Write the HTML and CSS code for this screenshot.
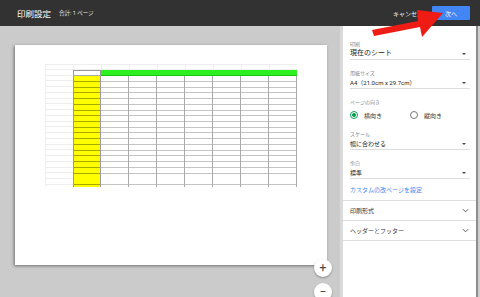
FILE: index.html
```html
<!DOCTYPE html>
<html lang="ja">
<head>
  <meta charset="UTF-8">
  <title>印刷設定</title>
  <link rel="stylesheet" href="styles.css">
</head>
<body>
  <header class="topbar">
    <div class="title"><b>印刷設定</b><span class="count">合計: 1 ページ</span></div>
    <div class="actions">
      <span class="cancel">キャンセル</span>
      <button class="next">次へ</button>
    </div>
  </header>

  <div class="main">
    <!-- preview -->
    <div class="preview">
      <div class="page">
        <div class="sheet">
          <div class="row1"></div>
          <div class="colA"></div>
          <div class="b2"></div>
          <div class="c2"></div>
          <div class="b3"></div>
          <div class="c3"></div>
        </div>
      </div>
      <div class="zoom">
        <button class="zbtn">+</button>
        <button class="zbtn">−</button>
      </div>
    </div>

    <!-- settings -->
    <div class="panel">
      <div class="fields">
        <div class="field">
          <div class="lbl">印刷</div>
          <div class="sel big">現在のシート<span class="caret"></span></div>
        </div>
        <div class="field">
          <div class="lbl">用紙サイズ</div>
          <div class="sel">A4（21.0cm x 29.7cm）<span class="caret"></span></div>
        </div>
        <div class="field">
          <div class="lbl">ページの向き</div>
          <div class="radios">
            <span class="radio on"><i></i>横向き</span>
            <span class="radio"><i></i>縦向き</span>
          </div>
        </div>
        <div class="field">
          <div class="lbl">スケール</div>
          <div class="sel">幅に合わせる<span class="caret"></span></div>
        </div>
        <div class="field">
          <div class="lbl">余白</div>
          <div class="sel">標準<span class="caret"></span></div>
        </div>
        <div class="link">カスタムの改ページを設定</div>
      </div>
      <div class="section">印刷形式
        <svg viewBox="0 0 8 5" width="7" height="5"><path d="M1 1l3 3 3-3" fill="none" stroke="#555" stroke-width="1.1"/></svg>
      </div>
      <div class="section">ヘッダーとフッター
        <svg viewBox="0 0 8 5" width="7" height="5"><path d="M1 1l3 3 3-3" fill="none" stroke="#555" stroke-width="1.1"/></svg>
      </div>
    </div>
    <div class="scroll"></div>
  </div>

  <!-- annotation arrow -->
  <svg class="arrow" width="85" height="40" viewBox="0 0 85 40">
    <polygon points="7,25 53,16 52,5 78,8 57,32 55,22 9,31" fill="#ee1c14"/>
  </svg>
</body>
</html>
```

FILE: styles.css
```css
body { margin: 0; width: 480px; height: 297px; overflow: hidden; font-family: Roboto, "Noto Sans CJK JP", sans-serif; background: #cbcbcb; position: relative; }
button { font-family: inherit; border: 0; }

.topbar { height: 26px; background: #323232; color: #fff; display: flex; align-items: center; justify-content: space-between; }
.title { padding-left: 17px; display: flex; align-items: center; }
.title b { font-weight: normal; font-size: 8.5px; }
.count { font-size: 5.5px; margin-left: 8px; color: #e8e8e8; }
.actions { display: flex; align-items: center; padding-right: 10px; }
.cancel { font-size: 6px; color: #f0f0f0; margin-right: 9px; }
.next { width: 38px; height: 14px; background: #4285f4; color: #fff; font-size: 6px; border-radius: 1px; padding: 0; }

.main { display: flex; height: 271px; }
.preview { width: 340px; position: relative; padding: 19px 0 0 15px; box-sizing: border-box; }
.page { width: 312px; height: 220px; background: #fff; box-shadow: -1px 1px 3px rgba(0,0,0,.45); padding: 19px 0 0 30px; box-sizing: border-box; }

/* spreadsheet thumbnail */
.sheet { display: grid; grid-template-columns: 28px 28px 196px; grid-template-rows: 6px 6px 111px; width: 252px; }
.row1 { grid-column: 1 / 4; border-top: 1px solid #eee; border-bottom: 1px solid #eee;
  background: repeating-linear-gradient(to right, #eee 0 1px, transparent 1px 28px); }
.colA { grid-column: 1; grid-row: 2 / 4; border-left: 1px solid #eee;
  background: repeating-linear-gradient(to bottom, transparent 0 4.75px, #eee 4.75px 5.75px); }
.b2 { border: 1px solid #999; border-bottom-color: #aaa; }
.c2 { background: #2cf01f; border-bottom: 1px solid #1cc010; }
.b3 { background:
  repeating-linear-gradient(to bottom, transparent 0 4.75px, #a8a800 4.75px 5.75px), #ffff00;
  border-left: 1px solid #999; border-right: 1px solid #999; }
.c3 { border-right: 1px solid #aaa;
  background:
  repeating-linear-gradient(to right, transparent 0 27px, #aaa 27px 28px),
  repeating-linear-gradient(to bottom, transparent 0 4.75px, #c4c4c4 4.75px 5.75px); }

.zoom { position: absolute; left: 314px; top: 233px; display: flex; flex-direction: column; gap: 6px; }
.zbtn { width: 18px; height: 18px; border-radius: 50%; background: #fff; color: #444; font-size: 12px; line-height: 18px; padding: 0; box-shadow: 0 1px 2px rgba(0,0,0,.35); }

.panel { width: 133px; background: #fff; border-left: 3px solid #dadada; }
.fields { padding: 14px 6px 5px 7px; }
.field { margin-bottom: 9px; }
.lbl { font-size: 5px; line-height: 8px; color: #888; }
.sel { font-size: 6px; line-height: 11px; color: #222; border-bottom: 1px solid #ddd; display: flex; justify-content: space-between; align-items: center; }
.sel.big { font-size: 7px; }
.caret { width: 0; height: 0; border-left: 2px solid transparent; border-right: 2px solid transparent; border-top: 2px solid #444; margin-right: 4px; }
.radios { display: flex; height: 12px; align-items: center; margin-top: 3px; font-size: 6px; color: #333; }
.radio { display: flex; align-items: center; width: 60px; }
.radio i { width: 6px; height: 6px; border: 1px solid #777; border-radius: 50%; margin: 0 6px 0 0; box-sizing: content-box; }
.radio.on i { border-color: #0f9d58; background: radial-gradient(#0f9d58 0 1.8px, #fff 2.2px); }
.link { font-size: 6px; line-height: 10px; color: #4285f4; margin-top: -3px; }
.section { height: 19px; border-top: 1px solid #dedede; font-size: 6px; color: #333; display: flex; align-items: center; justify-content: space-between; padding: 0 7px; }
.section:last-child { border-bottom: 1px solid #dedede; }

.scroll { width: 2px; background: #8c8c8c; border-right: 2px solid #cfcfcf; }

.arrow { position: absolute; left: 365px; top: 5px; }
```
